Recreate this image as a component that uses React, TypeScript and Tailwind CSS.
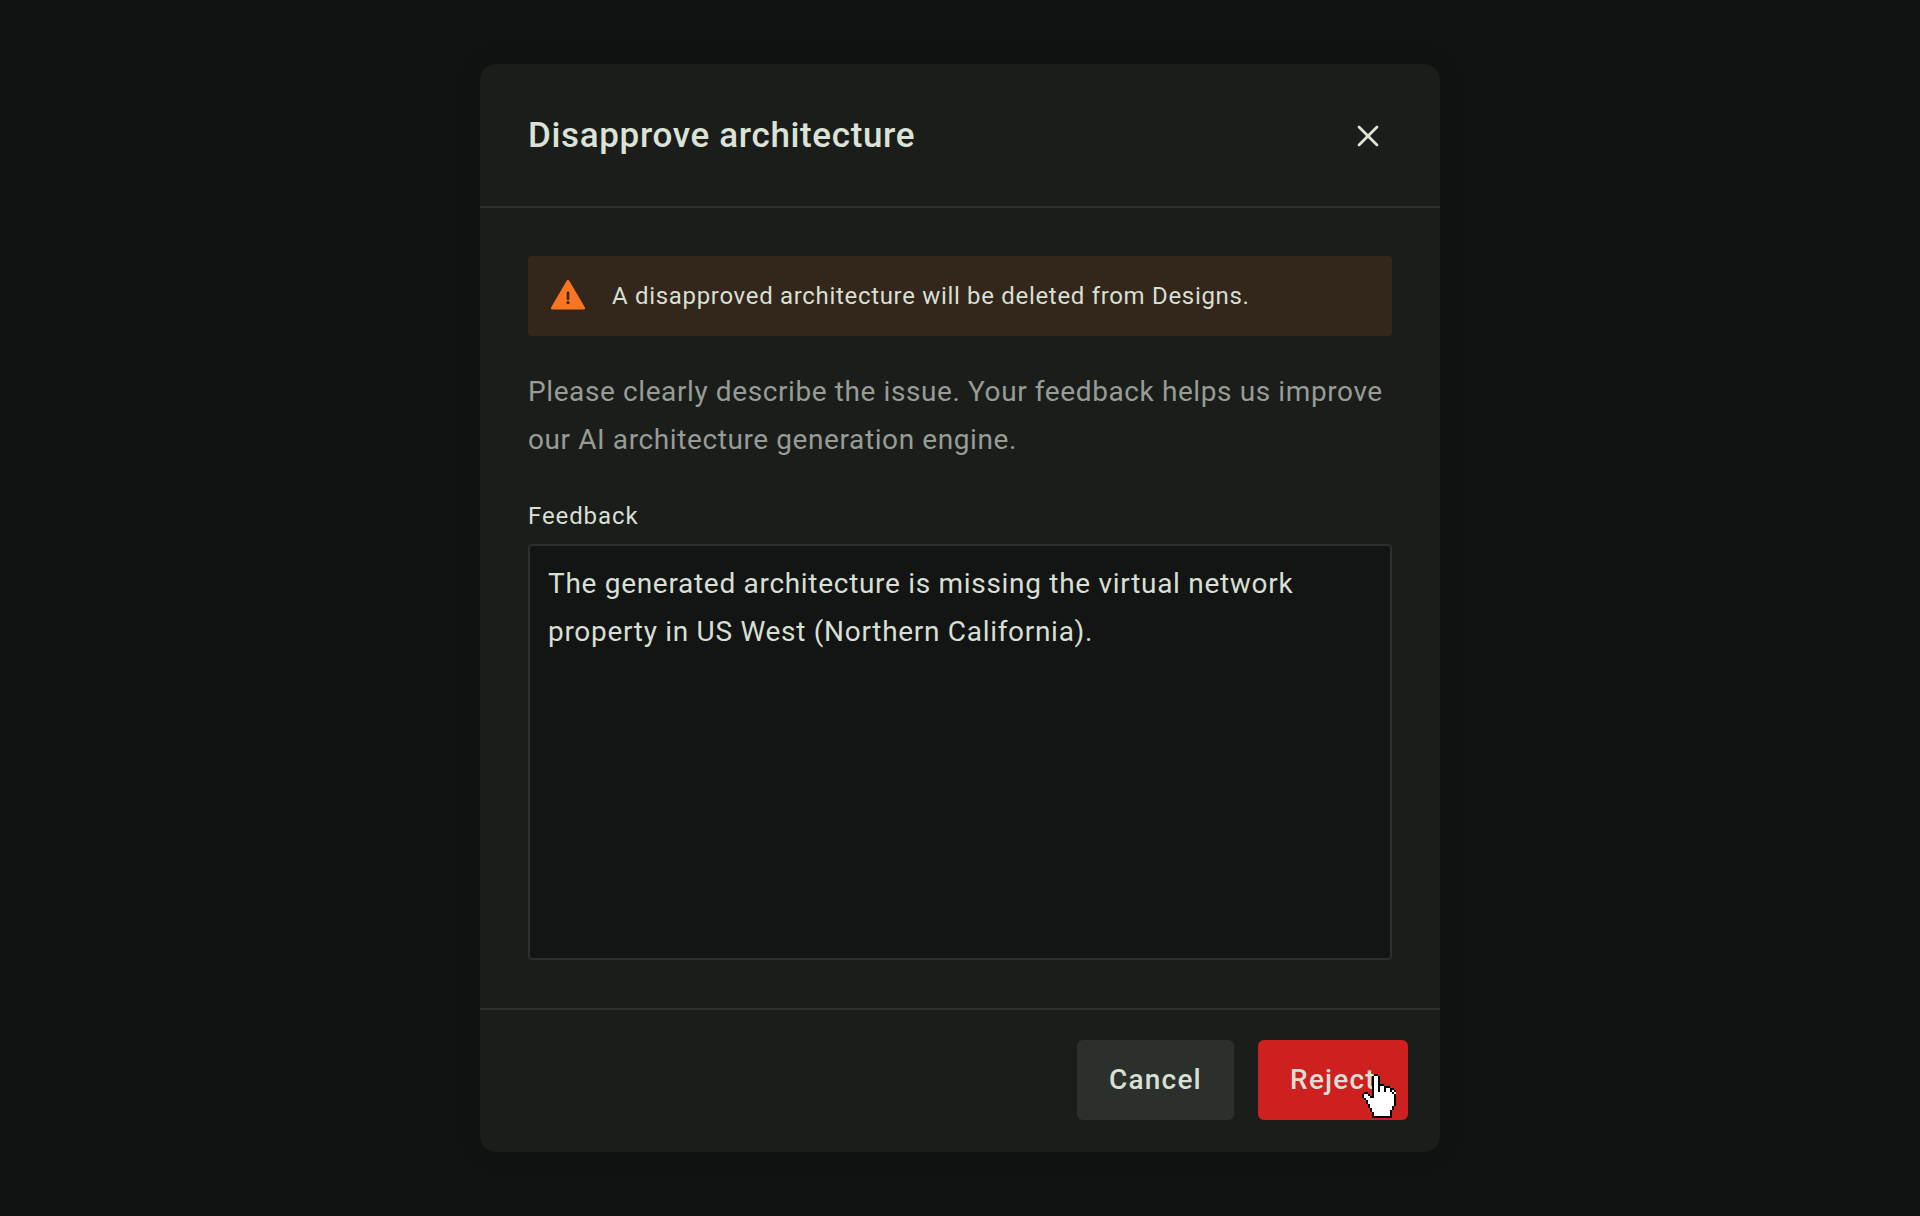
import { X } from "lucide-react";

const handRows = [
  "......##.........",
  ".....#oo#........",
  ".....#oo#........",
  ".....#oo#........",
  ".....#oo#........",
  ".....#oo###......",
  ".....#oo#oo###...",
  ".....#oo#oo#oo##.",
  ".....#oo#oo#oo#o#",
  ".##..#ooooooooo#o#",
  "#oo#.#oooooooooo#",
  "#ooo##oooooooooo#",
  ".#oooooooooooooo#",
  "..#ooooooooooooo#",
  "..#ooooooooooooo#",
  "...#oooooooooooo#",
  "...#ooooooooooo#.",
  "....#oooooooooo#.",
  "....#ooooooooo#..",
  ".....#oooooooo#..",
  ".....#oooooooo#..",
  ".....##########..",
];

function HandCursor() {
  return (
    <svg width="34" height="44" viewBox="0 0 17 22" shapeRendering="crispEdges" className="absolute left-[104px] top-[34px]">
      {handRows.flatMap((row, y) =>
        row.split("").map((c, x) =>
          c === "." ? null : <rect key={`${x}-${y}`} x={x} y={y} width="1" height="1" fill={c === "#" ? "#000" : "#fff"} />
        )
      )}
    </svg>
  );
}

function WarningIcon() {
  return (
    <svg width="36" height="32" viewBox="0 0 36 32">
      <path d="M18 1.5 L33.5 28 H2.5 Z" fill="#fa7522" stroke="#fa7522" strokeWidth="3" strokeLinejoin="round" />
      <rect x="16.7" y="11.5" width="2.6" height="8.5" rx="1.2" fill="#33261b" />
      <circle cx="18" cy="22.6" r="1.6" fill="#33261b" />
    </svg>
  );
}

export default function App() {
  return (
    <div className="flex h-[1216px] w-full items-center justify-center bg-[#111312] font-['Roboto',sans-serif]">
      <div className="flex h-[1088px] w-[960px] flex-col rounded-2xl bg-[#1b1d1b] shadow-[0_0_24px_rgba(0,0,0,0.15)]">
        <div className="flex h-[144px] items-center justify-between border-b-2 border-[#2c2f2d] pl-12 pr-[54px] pt-[2px]">
          <h1 className="text-[35px] font-medium tracking-[0.65px] text-[#dbe2d6]">Disapprove architecture</h1>
          <X size={36} strokeWidth={1.8} className="text-[#dfe6da]" />
        </div>
        <div className="flex flex-1 flex-col px-12 pt-12">
          <div className="flex h-20 items-center gap-[26px] rounded bg-[#33261b] px-[22px]">
            <WarningIcon />
            <span className="text-2xl tracking-[0.68px] text-[#d8dfd3]">A disapproved architecture will be deleted from Designs.</span>
          </div>
          <p className="mt-8 text-[28px] leading-[48px] tracking-[0.6px] text-[#979c96]">
            Please clearly describe the issue. Your feedback helps us improve our AI architecture generation engine.
          </p>
          <label className="mt-9 text-2xl leading-[32px] tracking-[0.9px] text-[#d8dfd3]">Feedback</label>
          <div className="mt-3 h-[416px] rounded border-2 border-[#2c2f2d] bg-[#131514] px-[18px] pb-3 pt-[14px] text-[28px] leading-[48px] tracking-[0.7px] text-[#d8dfd3]">
            The generated architecture is missing the virtual network property in US West (Northern California).
          </div>
        </div>
        <div className="flex h-[144px] items-start justify-end gap-6 border-t-2 border-[#2c2f2d] pr-8 pt-[30px]">
          <button className="h-20 w-[157px] rounded-md bg-[#2c302d] text-[28px] font-medium tracking-[1.2px] text-[#d8dfd3]">Cancel</button>
          <button className="relative h-20 w-[150px] rounded-md bg-[#cf2020] text-[28px] font-medium tracking-[1.2px] text-[#d8dfd3]">
            Reject
            <HandCursor />
          </button>
        </div>
      </div>
    </div>
  );
}
